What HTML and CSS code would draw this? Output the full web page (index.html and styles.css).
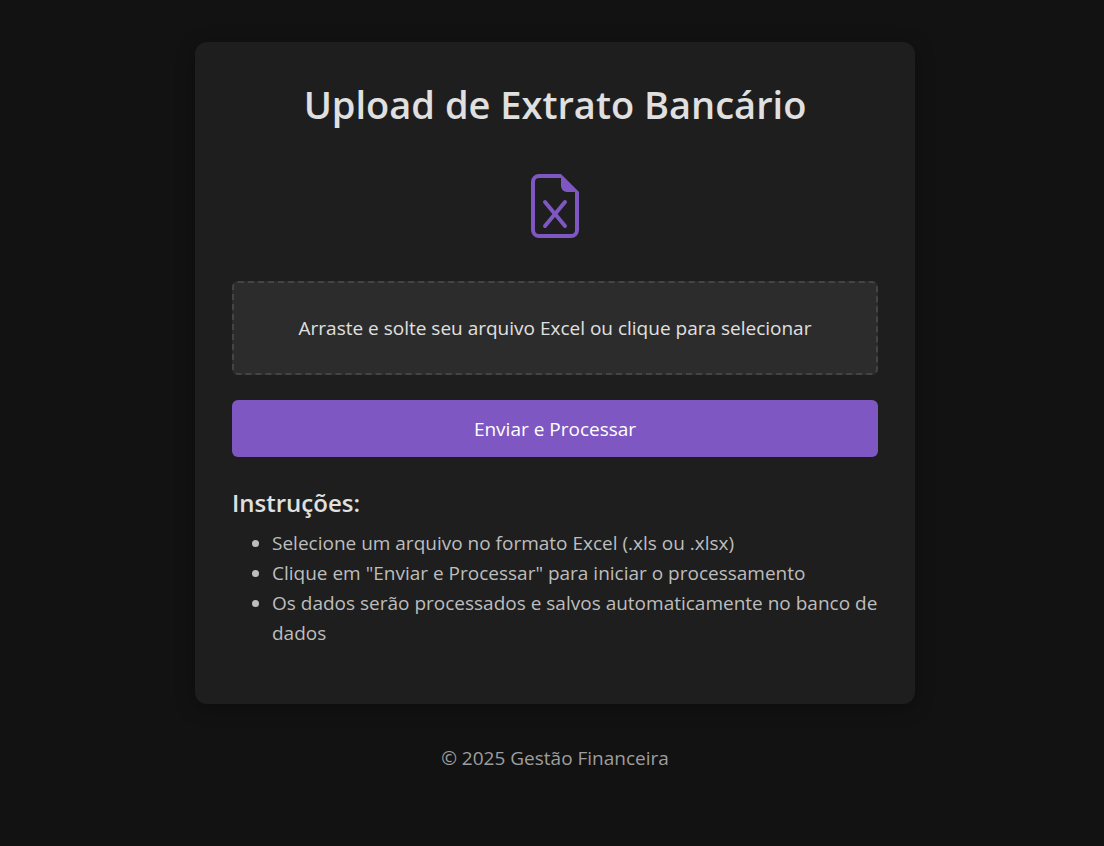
FILE: index.html
```html
<!DOCTYPE html>
<html lang="pt-BR">
<head>
<meta charset="utf-8">
<meta name="viewport" content="width=device-width, initial-scale=1">
<title>Upload de Extrato Bancário</title>
<link rel="stylesheet" href="styles.css">
</head>
<body>
<main class="card">
  <h1 class="title">Upload de Extrato Bancário</h1>
  <svg class="file-icon" viewBox="0 0 16 16" fill="currentColor" aria-hidden="true">
    <path d="M5.18 6.616a.5.5 0 0 1 .704.064L8 9.219l2.116-2.54a.5.5 0 1 1 .768.641L8.651 10l2.233 2.68a.5.5 0 0 1-.768.64L8 10.781l-2.116 2.54a.5.5 0 0 1-.768-.641L7.349 10 5.116 7.32a.5.5 0 0 1 .064-.704z"/>
    <path d="M14 14V4.500L9.500 0H4a2 2 0 0 0-2 2v12a2 2 0 0 0 2 2h8a2 2 0 0 0 2-2zM9.500 3A1.500 1.500 0 0 0 11 4.500h2V14a1 1 0 0 1-1 1H4a1 1 0 0 1-1-1V2a1 1 0 0 1 1-1h5.500v2z"/>
  </svg>
  <form class="form">
    <label class="dropzone" for="file">Arraste e solte seu arquivo Excel ou clique para selecionar</label>
    <input class="file-input" id="file" type="file" accept=".xls,.xlsx">
    <button class="submit" type="submit">Enviar e Processar</button>
  </form>
  <section class="help">
    <h2 class="subtitle">Instruções:</h2>
    <ul class="steps">
      <li>Selecione um arquivo no formato Excel (.xls ou .xlsx)</li>
      <li>Clique em "Enviar e Processar" para iniciar o processamento</li>
      <li>Os dados serão processados e salvos automaticamente no banco de dados</li>
    </ul>
  </section>
</main>
<footer class="footer">© 2025 Gestão Financeira</footer>
</body>
</html>
```
FILE: styles.css
```css
* { box-sizing: border-box; }

body {
  margin: 0;
  padding: 42px 16px 42px 22px;
  background: #121212;
  color: #e0e0e0;
  font-family: "Segoe UI", "Open Sans", "Noto Sans", sans-serif;
  font-size: 19px;
  line-height: 30px;
}

.card {
  max-width: 720px;
  margin: 0 auto;
  padding: 38px 37px;
  border-radius: 12px;
  background: #1e1e1e;
  box-shadow: 0 4px 20px rgba(0, 0, 0, 0.3);
}

.title {
  margin: 0 0 46px;
  font-size: 38px;
  font-weight: 600;
  line-height: 48px;
  text-align: center;
}

.file-icon {
  display: block;
  width: 64px;
  height: 64px;
  margin: 0 auto 43px;
  color: #7e57c2;
}

.form {
  display: flex;
  flex-direction: column;
  gap: 25px;
  position: relative;
}

.dropzone {
  padding: 30px;
  border: 2px dashed #444444;
  border-radius: 6px;
  background: #2c2c2c;
  text-align: center;
  cursor: pointer;
}

.file-input {
  position: absolute;
  width: 1px;
  height: 1px;
  opacity: 0;
}

.submit {
  padding: 14px 13px 13px;
  border: 0;
  border-radius: 6px;
  background: #7e57c2;
  color: #ffffff;
  font: inherit;
  cursor: pointer;
}

.help { margin-top: 31px; }

.subtitle {
  margin: 0 0 10px;
  font-size: 24px;
  font-weight: 600;
}

.steps {
  margin: 0;
  padding: 0 0 18px 40px;
  color: #bdbdbd;
}

.footer {
  margin-top: 39px;
  color: #9e9e9e;
  text-align: center;
}
```
